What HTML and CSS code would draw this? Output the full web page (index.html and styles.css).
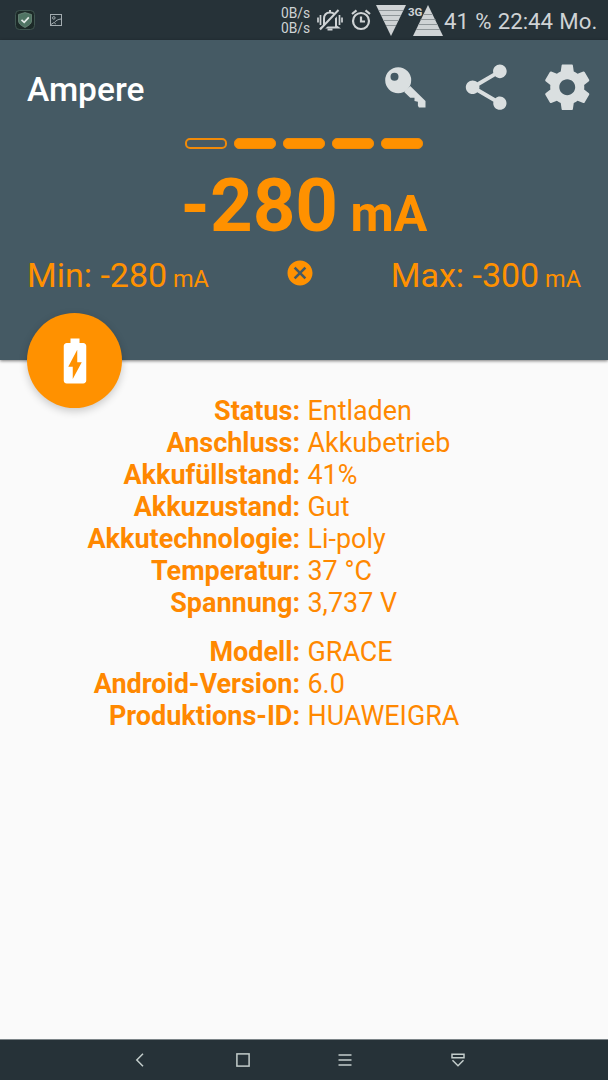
FILE: index.html
```html
<!DOCTYPE html>
<html lang="de">
<head>
    <meta charset="UTF-8">
    <meta name="viewport" content="width=device-width, initial-scale=1.0">
    <title>Ampere</title>
    <link rel="stylesheet" href="styles.css">
</head>
<body>

    <div class="statusbar">
        <svg class="icon-shield" width="20" height="20" viewBox="0 0 20 20">
            <rect x="0.5" y="0.5" width="19" height="19" rx="4" fill="#1c2a28" stroke="#3f5550"/>
            <path d="M10 2.500l6.500 2v6.500c0 3-3.500 5-6.500 6.500c-3-1.500-6.500-3.500-6.500-6.500V4.500z" fill="#4f7463" stroke="#7d9a8c" stroke-width="0.6"/>
            <path d="M6.500 9.800l2.700 2.500 4.600-5" fill="none" stroke="#e4ebe8" stroke-width="1.700"/>
        </svg>
        <svg class="icon-image" width="12" height="12" viewBox="0 0 12 12" fill="none" stroke="#a3acb0">
            <rect x="0.500" y="0.500" width="11" height="11"/>
            <circle cx="3.800" cy="3.900" r="1.300"/>
            <path d="M1 10.500l3-2 1.800 1.500M4.500 8.500C6 6.500 8 5.300 11 5"/>
        </svg>
        <div class="speed">0B/s<br>0B/s</div>
        <svg class="icon-mute" width="26" height="24" viewBox="0 0 26 24" fill="none" stroke="#cfd3d5" stroke-width="2">
            <path d="M7 18V11C7 7 9 4.500 13 4.500s6 2.500 6 6.500v7l2 1.500H5zM13 2V4"/>
            <path d="M10.500 21.500h5"/>
            <path d="M4.500 22.500L23 3" stroke="#263238" stroke-width="3"/>
            <path d="M3 21.500L21.500 2"/>
            <path d="M3.500 7v10M1 9.500v5M22.500 7v10M25 9.500v5" stroke-width="1.700"/>
        </svg>
        <svg class="icon-alarm" width="20" height="22" viewBox="0 0 20 22" fill="none" stroke="#cfd3d5" stroke-width="2.200">
            <circle cx="10" cy="12" r="8"/>
            <path d="M10 7.500v5h4M1 5l4.500-3.700M19 5l-4.500-3.700"/>
        </svg>
        <svg class="icon-down" width="30" height="31" viewBox="0 0 30 31">
            <path d="M0 0h30L15 31z" fill="#cfd3d5"/>
            <path d="M3 5.500h24M5.200 10.500h19.600M7.500 15.500h15M10 20.500h10" stroke="#8f9699"/>
        </svg>
        <svg class="icon-up" width="30" height="31" viewBox="0 0 30 31">
            <path d="M15 0l15 31H0z" fill="#cfd3d5"/>
            <path d="M10 9.500h10M7.500 14.500h15M5.500 19.500h19M3 24.500h24" stroke="#8f9699"/>
        </svg>
        <span class="net">3G</span>
        <span class="clock">41 % 22:44 Mo.</span>
    </div>

    <div class="header">
        <div class="toolbar">
            <h1>Ampere</h1>
            <svg viewBox="-0.7 0 54.500 54.500">
                <path fill-rule="evenodd" d="M6.500 20.200a13 13 0 1 1 26 0a13 13 0 1 1 -26 0zM11.800 16.800a4 4 0 1 0 8 0a4 4 0 1 0 -8 0z"/>
                <path d="M31.500 26L46.800 41v6.400h-6.600l-1-1.700v-4l-3.400-.7v-3.300h-4.300L25.500 32z"/>
            </svg>
            <svg viewBox="0 0 24 24">
                <path d="M18 16.080c-.76 0-1.440.3-1.960.77L8.910 12.700c.05-.23.09-.46.09-.7s-.04-.47-.09-.7l7.050-4.110c.54.5 1.250.81 2.040.81 1.660 0 3-1.340 3-3s-1.340-3-3-3-3 1.340-3 3c0 .24.04.47.09.7L8.040 9.810C7.500 9.310 6.790 9 6 9c-1.660 0-3 1.340-3 3s1.340 3 3 3c.79 0 1.500-.31 2.040-.81l7.120 4.160c-.05.21-.08.43-.08.65 0 1.610 1.310 2.920 2.920 2.920s2.920-1.310 2.920-2.920-1.310-2.920-2.920-2.920z"/>
            </svg>
            <svg viewBox="0 0 24 24">
                <path d="M19.430 12.980c.04-.32.07-.64.07-.98s-.03-.66-.07-.98l2.110-1.650c.19-.15.24-.42.12-.64l-2-3.460c-.12-.22-.39-.3-.61-.22l-2.490 1c-.52-.4-1.080-.73-1.690-.98l-.38-2.650C14.460 2.180 14.250 2 14 2h-4c-.25 0-.46.18-.49.42l-.38 2.650c-.61.25-1.170.59-1.690.98l-2.490-1c-.23-.09-.49 0-.61.22l-2 3.460c-.13.22-.07.49.12.64l2.110 1.650c-.04.32-.07.65-.07.98s.03.66.07.98l-2.110 1.650c-.19.15-.24.42-.12.64l2 3.460c.12.22.39.3.61.22l2.490-1c.52.4 1.080.73 1.690.98l.38 2.650c.03.24.24.42.49.42h4c.25 0 .46-.18.49-.42l.38-2.650c.61-.25 1.170-.59 1.690-.98l2.490 1c.23.09.49 0 .61-.22l2-3.460c.12-.22.07-.49-.12-.64l-2.110-1.650zM12 15.500c-1.930 0-3.500-1.570-3.500-3.500s1.570-3.500 3.500-3.500 3.500 1.570 3.500 3.500-1.570 3.500-3.500 3.500z"/>
            </svg>
        </div>

        <div class="bars">
            <span class="bar empty"></span>
            <span class="bar"></span>
            <span class="bar"></span>
            <span class="bar"></span>
            <span class="bar"></span>
        </div>

        <div class="current">-280<small> mA</small></div>

        <div class="minmax">
            <div class="min">Min: -280<small> mA</small></div>
            <svg width="30" height="30" viewBox="0 0 24 24">
                <path d="M12 2C6.470 2 2 6.470 2 12s4.470 10 10 10 10-4.470 10-10S17.530 2 12 2zm5 13.590L15.590 17 12 13.410 8.410 17 7 15.590 10.590 12 7 8.410 8.410 7 12 10.590 15.590 7 17 8.410 13.410 12 17 15.590z"/>
            </svg>
            <div class="max">Max: -300<small> mA</small></div>
        </div>

        <div class="fab">
            <svg width="54" height="54" viewBox="0 0 24 24">
                <path d="M15.670 4H14V2h-4v2H8.330C7.600 4 7 4.600 7 5.330v15.330C7 21.400 7.600 22 8.330 22h7.330c.74 0 1.340-.6 1.340-1.330V5.330C17 4.600 16.400 4 15.670 4zM11 20v-5.500H9L13 7v5.500h2L11 20z"/>
            </svg>
        </div>
    </div>

    <div class="content">
        <dl>
            <dt>Status:</dt><dd>Entladen</dd>
            <dt>Anschluss:</dt><dd>Akkubetrieb</dd>
            <dt>Akkufüllstand:</dt><dd>41%</dd>
            <dt>Akkuzustand:</dt><dd>Gut</dd>
            <dt>Akkutechnologie:</dt><dd>Li-poly</dd>
            <dt>Temperatur:</dt><dd>37 °C</dd>
            <dt>Spannung:</dt><dd>3,737 V</dd>
        </dl>
        <dl>
            <dt>Modell:</dt><dd>GRACE</dd>
            <dt>Android-Version:</dt><dd>6.0</dd>
            <dt>Produktions-ID:</dt><dd>HUAWEIGRA</dd>
        </dl>
    </div>

    <div class="navbar">
        <svg width="14" height="14" viewBox="0 0 14 14"><path d="M10 0.800L3.800 7l6.200 6.200"/></svg>
        <svg width="14" height="14" viewBox="0 0 14 14"><rect x="0.900" y="0.900" width="12.200" height="12.200"/></svg>
        <svg width="14" height="14" viewBox="0 0 14 14"><path d="M0.500 2h13M0.500 7h13M0.500 12h13"/></svg>
        <svg width="14" height="14" viewBox="0 0 14 14"><path d="M1 1.200h12v3.600H1zM1.500 7.200L7 12.800l5.500-5.600"/></svg>
    </div>

</body>
</html>
```
FILE: styles.css
```css
* {
    box-sizing: border-box;
}
body {
    margin: 0;
    height: 1080px;
    display: flex;
    flex-direction: column;
    font-family: Roboto, sans-serif;
    background-color: #fafafa;
    color: #ff8800;
    overflow: hidden;
}
svg {
    flex: none;
}
.statusbar {
    position: relative;
    height: 40px;
    flex: none;
    display: flex;
    align-items: center;
    padding-left: 15px;
    background-color: #263238;
    color: #cfd3d5;
}
.icon-image {
    margin-left: 15px;
}
.speed {
    margin: 1px 0 0 219px;
    width: 36px;
    font-size: 13.8px;
    line-height: 15px;
    white-space: nowrap;
}
.icon-alarm {
    margin-left: 8px;
}
.icon-down {
    margin-left: 5px;
}
.icon-up {
    margin-left: 7px;
}
.net {
    position: absolute;
    left: 408px;
    top: 5px;
    font-size: 11.5px;
    line-height: 14px;
    font-weight: bold;
}
.clock {
    margin: 2px 0 0 1px;
    font-size: 22.2px;
    word-spacing: 0.8px;
    white-space: nowrap;
}
.header {
    position: relative;
    height: 320px;
    flex: none;
    background-color: #455a64;
    color: #ff9100;
    box-shadow: 0 1px 3px rgba(0, 0, 0, 0.5);
}
.toolbar {
    display: flex;
    align-items: center;
    height: 95px;
    padding: 0 13.5px 0 27px;
}
.toolbar h1 {
    flex: 1;
    margin: 3px 0 0;
    font-size: 33.5px;
    font-weight: 500;
    color: #fff;
}
.toolbar svg {
    width: 54.5px;
    height: 54.5px;
    margin-left: 26.5px;
    fill: #dadfe0;
}
.bars {
    display: flex;
    justify-content: center;
    gap: 7px;
    margin-top: 3px;
}
.bar {
    width: 42px;
    height: 11px;
    border: 1.5px solid #f08a08;
    border-radius: 5px;
    background-color: #ff9100;
}
.bar.empty {
    border: 2px solid #f08a08;
    background-color: transparent;
}
.current {
    margin-top: 17px;
    font-size: 74.5px;
    line-height: 80px;
    font-weight: bold;
    text-align: center;
    white-space: nowrap;
}
.current small {
    font-size: 50px;
}
.minmax {
    display: flex;
    align-items: flex-start;
    justify-content: space-between;
    padding: 0 27px;
    font-size: 34px;
    line-height: 42px;
}
.minmax small {
    font-size: 23.5px;
}
.minmax svg {
    margin-top: 4px;
    fill: #ff9100;
}
.fab {
    position: absolute;
    left: 27px;
    bottom: -48px;
    width: 95px;
    height: 95px;
    display: flex;
    align-items: center;
    justify-content: center;
    border-radius: 50%;
    background-color: #ff9100;
    box-shadow: 0 3px 8px rgba(0, 0, 0, 0.2);
}
.fab svg {
    fill: #fff;
}
.content {
    flex: 1;
    padding-top: 35px;
}
dl {
    display: grid;
    grid-template-columns: 300px 1fr;
    column-gap: 7.5px;
    margin: 0 0 17px;
    font-size: 27px;
    line-height: 32px;
}
dt {
    font-weight: bold;
    text-align: right;
}
dd {
    margin: 0;
    font-size: 26.9px;
}
.navbar {
    flex: none;
    display: flex;
    align-items: center;
    height: 41px;
    padding-left: 133px;
    gap: 88.5px;
    border-top: 1px solid #7c8488;
    background-color: #263238;
}
.navbar svg {
    fill: none;
    stroke: #c3cdcb;
    stroke-width: 1.5;
}
.navbar svg:last-child {
    margin-left: 10.5px;
}
```
